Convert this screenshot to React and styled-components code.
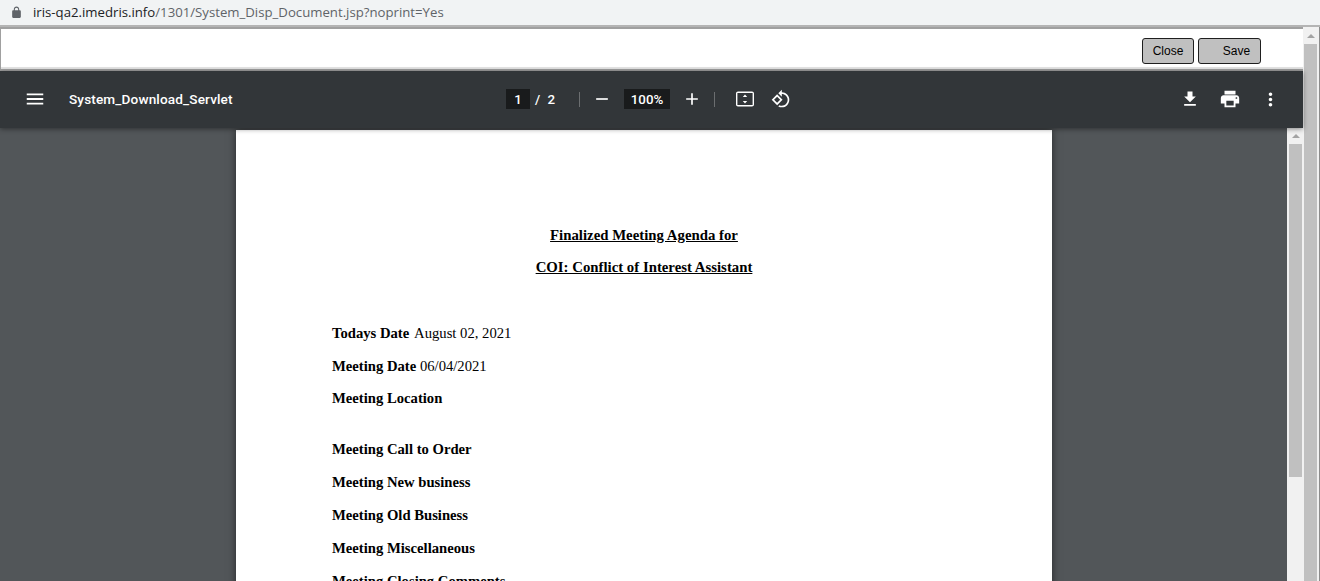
import React from 'react'
import styled, { createGlobalStyle } from 'styled-components'

const GlobalStyle = createGlobalStyle`
  html, body { margin: 0; padding: 0; background: #fff; }
  body { font-family: "Liberation Sans", Arial, sans-serif; }
`

const Screen = styled.div`
  width: 1320px;
  height: 581px;
  overflow: hidden;
  display: flex;
  flex-direction: column;
`

const AddressBar = styled.div`
  flex: none;
  height: 25px;
  background: #f1f3f4;
  display: flex;
  align-items: center;
  padding: 0 0 1px 10px;
  box-sizing: border-box;
  gap: 10px;
  font-family: "Open Sans", sans-serif;
  font-size: 13.2px;
  color: #5f6368;
  svg { width: 13px; height: 13px; fill: #5f6368; flex: none; }
`

const Host = styled.span`
  color: #202124;
`

const Frames = styled.div`
  flex: 1;
  min-height: 0;
  display: flex;
  border-top: 2px solid #b4b4b4;
`

const Main = styled.div`
  flex: none;
  width: 1303px;
  display: flex;
  flex-direction: column;
  border-top: 2px solid #a0a0a0;
  border-left: 1px solid #a0a0a0;
  box-sizing: border-box;
`

const ButtonBar = styled.div`
  flex: none;
  height: 40px;
  background: #fff;
  display: flex;
  justify-content: flex-end;
  align-items: flex-start;
  gap: 4px;
  padding: 9px 42px 0 0;
  box-sizing: border-box;
  border-bottom: 2px solid #e4e4e4;
`

const FormButton = styled.button`
  height: 26px;
  width: ${p => p.$width}px;
  padding: 0 0 0 ${p => p.$indent || 0}px;
  background: #c0c0c0;
  border: 1px solid #1f1f1f;
  border-radius: 3px;
  font-family: "Liberation Sans", Arial, sans-serif;
  font-size: 12px;
  color: #000;
`

const PdfViewer = styled.div`
  flex: 1;
  min-height: 0;
  display: flex;
  flex-direction: column;
  border-top: 2px solid #a0a0a0;
  margin-left: -1px;
`

const Toolbar = styled.div`
  flex: none;
  height: 57px;
  padding-bottom: 1px;
  box-sizing: border-box;
  background: #323639;
  display: flex;
  align-items: center;
  position: relative;
  z-index: 2;
  color: #fff;
  font-family: Roboto, sans-serif;
  box-shadow: 0 1px 5px rgba(0, 0, 0, 0.45);
`

const ToolbarLeft = styled.div`
  flex: none;
  width: 506px;
  display: flex;
  align-items: center;
  padding-left: 23px;
  box-sizing: border-box;
`

const ToolbarCenter = styled.div`
  flex: none;
  display: flex;
  align-items: center;
`

const ToolbarRight = styled.div`
  margin-left: auto;
  display: flex;
  align-items: center;
  gap: 16px;
  padding-right: 21px;
`

const Icon = styled.svg`
  flex: none;
  display: block;
  width: ${p => p.$size || 24}px;
  height: ${p => p.$size || 24}px;
  fill: #fff;
  margin: ${p => p.$margin || 0};
`

const Title = styled.span`
  margin-left: 22px;
  font-size: 13.6px;
  font-weight: 500;
  letter-spacing: 0.01em;
  white-space: nowrap;
`

const NumberBox = styled.span`
  flex: none;
  width: ${p => p.$width}px;
  height: 20px;
  background: #191b1c;
  display: flex;
  align-items: center;
  justify-content: center;
  font-size: 13.3px;
  font-weight: 500;
`

const PageTotal = styled.span`
  font-size: 13.3px;
  font-weight: 500;
  margin-left: 5px;
  width: 44px;
  word-spacing: 4px;
  white-space: pre;
`

const Divider = styled.span`
  flex: none;
  width: 1px;
  height: 15px;
  background: #6b6e70;
`

const ViewerBody = styled.div`
  flex: 1;
  min-height: 0;
  display: flex;
  background: #525659;
`

const Viewport = styled.div`
  flex: 1;
  min-width: 0;
  overflow: hidden;
  padding-top: 2px;
  padding-left: 236px;
`

const Sheet = styled.div`
  width: 816px;
  height: 1056px;
  box-sizing: border-box;
  background: #fff;
  box-shadow: 0 0 8px rgba(0, 0, 0, 0.55);
  padding: 97px 96px 0;
  font-family: "Liberation Serif", "Times New Roman", serif;
  font-size: 14.67px;
  line-height: 17px;
  color: #000;
`

const Heading = styled.div`
  text-align: center;
  font-size: 14.8px;
  font-weight: 700;
  text-decoration: underline;
  margin-bottom: ${p => p.$after}px;
`

const Row = styled.div`
  margin-bottom: ${p => p.$after}px;
`

const RowValue = styled.span`
  margin-left: ${p => p.$gap || 0}px;
`

const Scrollbar = styled.div`
  flex: none;
  width: ${p => p.$width}px;
  background: #f1f1f1;
  display: flex;
  flex-direction: column;
  align-items: flex-start;
  box-sizing: border-box;
  padding-left: ${p => p.$inset}px;
  border-right: ${p => (p.$edge ? '1px solid #8c8c8c' : 'none')};
`

const ArrowCell = styled.div`
  flex: none;
  width: 13px;
  height: ${p => p.$height}px;
  display: flex;
  align-items: center;
  justify-content: center;
  &::before {
    content: '';
    border-left: 4px solid transparent;
    border-right: 4px solid transparent;
    border-bottom: 4px solid #a3a3a3;
  }
`

const Thumb = styled.div`
  flex: none;
  width: 13px;
  height: ${p => p.$height}px;
  background: #c0c0c0;
`

const paths = {
  lock: 'M18 8h-1V6c0-2.76-2.24-5-5-5S7 3.24 7 6v2H6c-1.1 0-2 .9-2 2v10c0 1.1.9 2 2 2h12c1.1 0 2-.9 2-2V10c0-1.1-.9-2-2-2zM9 6c0-1.66 1.34-3 3-3s3 1.34 3 3v2H9V6z',
  menu: 'M3 18h18v-2H3v2zm0-5h18v-2H3v2zm0-7v2h18V6H3z',
  minus: 'M19 13H5v-2h14v2z',
  plus: 'M19 13h-6v6h-2v-6H5v-2h6V5h2v6h6v2z',
  fit: 'M19 4.5H5c-1.1 0-2 .9-2 2v11c0 1.1.9 2 2 2h14c1.1 0 2-.9 2-2v-11c0-1.1-.9-2-2-2zm.6 13.4H4.4V6.1h15.2v11.8zM12 7.6 9.8 10h4.4L12 7.6zm0 8.8 2.2-2.4H9.8l2.2 2.4z',
  rotate: 'M7.34 6.41L.86 12.9l6.49 6.48 6.49-6.48-6.5-6.49zM3.69 12.9l3.66-3.66L11 12.9l-3.66 3.66-3.65-3.66zm15.67-6.26C17.61 4.88 15.3 4 13 4V.76L8.76 5 13 9.24V6c1.79 0 3.58.68 4.95 2.05 2.73 2.73 2.73 7.17 0 9.9C16.58 19.32 14.79 20 13 20c-.97 0-1.94-.21-2.84-.61l-1.49 1.49C10.02 21.62 11.51 22 13 22c2.3 0 4.61-.88 6.36-2.64 3.52-3.51 3.52-9.21 0-12.72z',
  download: 'M19 9h-4V3H9v6H5l7 7 7-7zM5 18v2h14v-2H5z',
  print: 'M19 8H5c-1.66 0-3 1.34-3 3v6h4v4h12v-4h4v-6c0-1.66-1.34-3-3-3zm-3 11H8v-5h8v5zm3-7c-.55 0-1-.45-1-1s.45-1 1-1 1 .45 1 1-.45 1-1 1zm-1-9H6v4h12V3z',
  more: 'M12 8c1.1 0 2-.9 2-2s-.9-2-2-2-2 .9-2 2 .9 2 2 2zm0 2c-1.1 0-2 .9-2 2s.9 2 2 2 2-.9 2-2-.9-2-2-2zm0 6c-1.1 0-2 .9-2 2s.9 2 2 2 2-.9 2-2-.9-2-2-2z',
}

const Glyph = ({ name, margin, size }) => (
  <Icon viewBox="0 0 24 24" $margin={margin} $size={size}>
    <path d={paths[name]} />
  </Icon>
)

const agenda = [
  { bold: 'Todays Date', text: ' August 02, 2021', gap: 2, after: 16 },
  { bold: 'Meeting Date', text: ' 06/04/2021', after: 15 },
  { bold: 'Meeting Location', after: 34 },
  { bold: 'Meeting Call to Order', after: 16 },
  { bold: 'Meeting New business', after: 16 },
  { bold: 'Meeting Old Business', after: 16 },
  { bold: 'Meeting Miscellaneous', after: 16 },
  { bold: 'Meeting Closing Comments', after: 16 },
]

export default function App() {
  return (
    <Screen>
      <GlobalStyle />
      <AddressBar>
        <svg viewBox="0 0 24 24"><path d={paths.lock} /></svg>
        <span><Host>iris-qa2.imedris.info</Host>/1301/System_Disp_Document.jsp?noprint=Yes</span>
      </AddressBar>
      <Frames>
        <Main>
          <ButtonBar>
            <FormButton $width={52}>Close</FormButton>
            <FormButton $width={63} $indent={14}>Save</FormButton>
          </ButtonBar>
          <PdfViewer>
            <Toolbar>
              <ToolbarLeft>
                <Glyph name="menu" size={22} margin="0 1px" />
                <Title>System_Download_Servlet</Title>
              </ToolbarLeft>
              <ToolbarCenter>
                <NumberBox $width={24}>1</NumberBox>
                <PageTotal>/ 2</PageTotal>
                <Divider />
                <Glyph name="minus" size={20} margin="0 12px" />
                <NumberBox $width={46}>100%</NumberBox>
                <Glyph name="plus" size={20} margin="0 12px" />
                <Divider />
                <Glyph name="fit" margin="0 6px 0 18px" />
                <Glyph name="rotate" size={20} margin="0 0 0 8px" />
              </ToolbarCenter>
              <ToolbarRight>
                <Glyph name="download" size={20} margin="0 2px" />
                <Glyph name="print" size={22} margin="0 1px" />
                <Glyph name="more" size={21} margin="0 1.5px" />
              </ToolbarRight>
            </Toolbar>
            <ViewerBody>
              <Viewport>
                <Sheet>
                  <Heading $after={15}>Finalized Meeting Agenda for</Heading>
                  <Heading $after={49}>COI: Conflict of Interest Assistant</Heading>
                  {agenda.map(row => (
                    <Row key={row.bold} $after={row.after}>
                      <b>{row.bold}</b><RowValue $gap={row.gap}>{row.text}</RowValue>
                    </Row>
                  ))}
                </Sheet>
              </Viewport>
              <Scrollbar $width={16} $inset={2}>
                <ArrowCell $height={16} />
                <Thumb $height={333} />
              </Scrollbar>
            </ViewerBody>
          </PdfViewer>
        </Main>
        <Scrollbar $width={17} $inset={1} $edge>
          <ArrowCell $height={17} />
          <Thumb $height={560} />
        </Scrollbar>
      </Frames>
    </Screen>
  )
}
